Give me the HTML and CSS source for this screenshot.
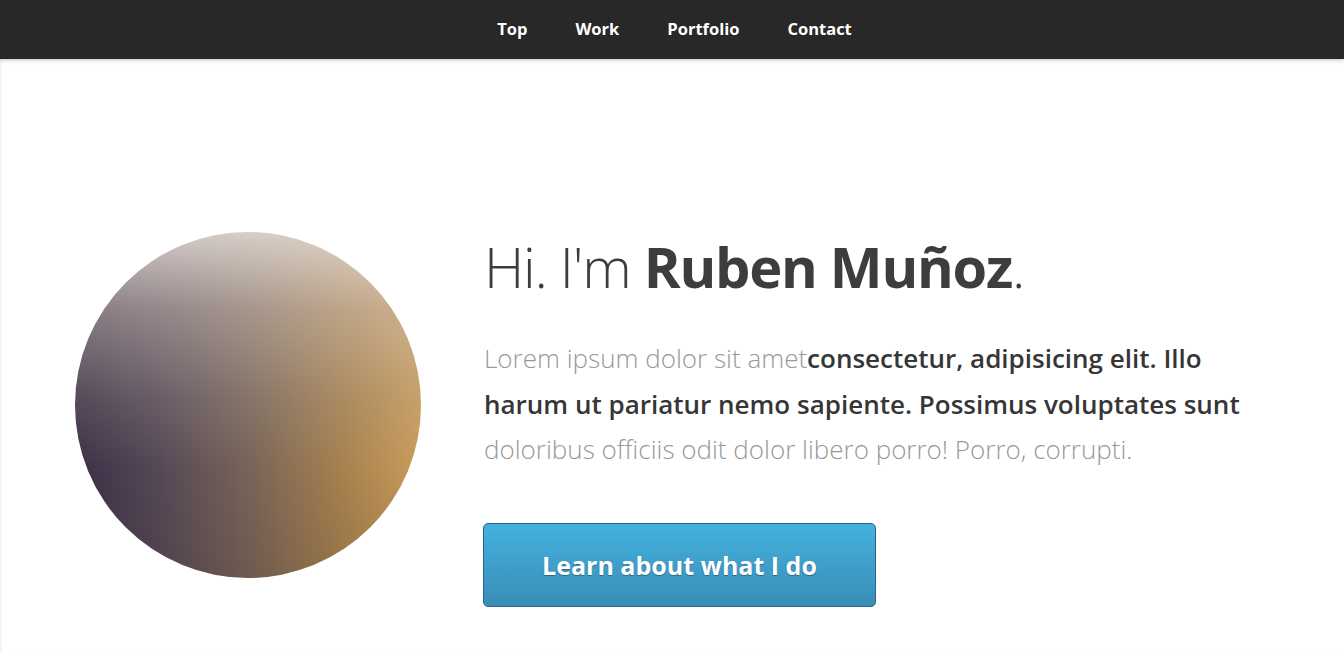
FILE: index.html
```html
<!DOCTYPE html>
<html>
<head>
<meta charset="utf-8">
<link rel="stylesheet" href="styles.css">
</head>
<body>
<nav class="nav">
  <a class="nav-link" href="#">Top</a>
  <a class="nav-link" href="#">Work</a>
  <a class="nav-link" href="#">Portfolio</a>
  <a class="nav-link" href="#">Contact</a>
</nav>
<main class="hero">
  <div class="avatar"></div>
  <div class="intro">
    <h1 class="title">Hi. I'm <strong>Ruben Muñoz</strong>.</h1>
    <p class="lead">Lorem ipsum dolor sit amet<strong>consectetur, adipisicing elit. Illo harum ut pariatur nemo sapiente. Possimus voluptates sunt</strong> doloribus officiis odit dolor libero porro! Porro, corrupti.</p>
    <a class="btn" href="#">Learn about what I do</a>
  </div>
</main>
</body>
</html>
```
FILE: styles.css
```css
html, body {
  margin: 0;
  padding: 0;
}
body {
  font-family: "Open Sans", "Noto Sans", sans-serif;
  background: #fff;
  box-shadow: inset 2px 0 3px -1px rgba(0,0,0,0.08);
  min-height: 653px;
}
.nav {
  height: 59px;
  background: #282828;
  display: flex;
  justify-content: center;
  align-items: center;
  gap: 48px;
  box-shadow: 0 1px 4px rgba(0,0,0,0.25);
  position: relative;
  padding-left: 5px;
  padding-bottom: 2px;
  box-sizing: border-box;
}
.nav-link {
  color: #fff;
  font-weight: 700;
  font-size: 16.5px;
  line-height: 20px;
  text-decoration: none;
}
.hero {
  display: flex;
  align-items: flex-start;
  padding: 173px 0 0 75px;
}
.avatar {
  width: 346px;
  height: 346px;
  border-radius: 50%;
  flex: none;
  background:
    linear-gradient(to bottom, rgba(228,220,214,0.88) 0%, rgba(212,200,192,0.5) 22%, rgba(190,178,170,0.2) 48%, rgba(120,100,90,0) 68%, rgba(40,20,10,0.12) 100%),
    linear-gradient(to right, #3b3046 0%, #564957 25%, #7a6658 52%, #a8824f 78%, #c99c5a 100%);
}
.intro {
  margin-left: 62px;
}
.title {
  margin: 0;
  font-size: 56px;
  font-weight: 300;
  color: #3d3d3d;
  line-height: 68px;
  letter-spacing: -1.25px;
  padding-left: 1px;
}
.title strong {
  font-weight: 700;
}
.lead {
  margin: 36px 0 0;
  width: 780px;
  font-size: 26px;
  line-height: 45.5px;
  font-weight: 300;
  color: #999;
  padding-left: 1px;
}
.lead strong {
  font-weight: 600;
  color: #363636;
}
.btn {
  display: flex;
  justify-content: center;
  align-items: center;
  margin-top: 50px;
  width: 391px;
  height: 82px;
  border: 1px solid #2c6283;
  border-radius: 5px;
  background: linear-gradient(to bottom, #43b1de, #3a8db7);
  color: #fff;
  font-weight: 700;
  font-size: 25px;
  text-decoration: none;
  text-shadow: 0 1px 1px rgba(0,0,0,0.35);
}
```
